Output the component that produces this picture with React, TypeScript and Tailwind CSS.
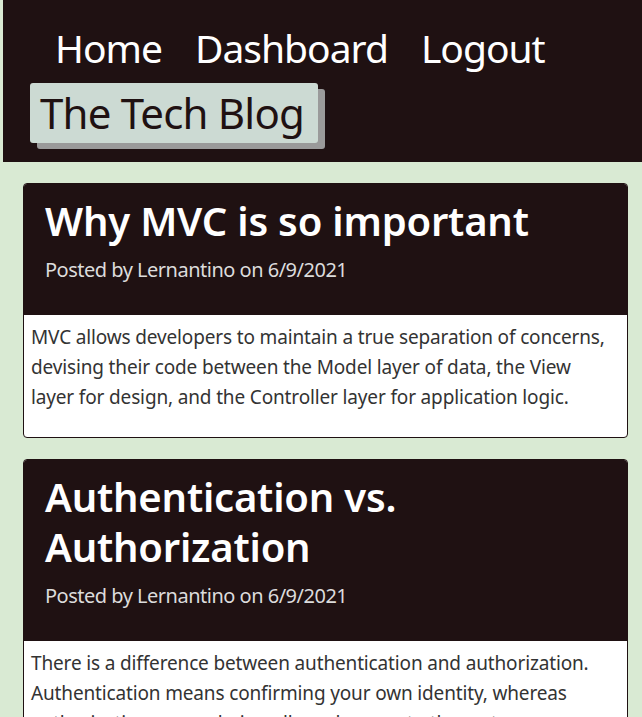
export default function App() {
  return (
    <div className="min-h-screen bg-[#d9ead3] pl-[3px] font-['Noto_Sans',sans-serif]">
      <header className="h-[162px] bg-[#1f1112] pt-[23px]">
        <nav className="flex gap-[33px] pl-[52px] text-[39px] leading-[50px] tracking-[-1px] text-white">
          <a>Home</a>
          <a>Dashboard</a>
          <a>Logout</a>
        </nav>
        <div className="mt-[10px] ml-[27px] inline-block rounded-[3px] bg-[#ccdad3] pl-[10px] pr-[14px] text-[42px] leading-[60px] tracking-[-0.8px] text-[#1f1112] shadow-[7px_6px_0_#9a9a9a]">
          The Tech Blog
        </div>
      </header>

      <main className="flex flex-col gap-[21px] pt-[21px] pl-[20px] pr-[14px]">
        <Post
          title="Why MVC is so important"
          meta="Posted by Lernantino on 6/9/2021"
          body="MVC allows developers to maintain a true separation of concerns, devising their code between the Model layer of data, the View layer for design, and the Controller layer for application logic."
        />
        <Post
          title="Authentication vs. Authorization"
          meta="Posted by Lernantino on 6/9/2021"
          body="There is a difference between authentication and authorization. Authentication means confirming your own identity, whereas authorization means being allowed access to the system."
        />
      </main>
    </div>
  )
}

function Post({ title, meta, body }: { title: string; meta: string; body: string }) {
  return (
    <article className="overflow-hidden rounded-[4px] border border-[#1f1112] bg-white">
      <div className="bg-[#1f1112] pl-[21px] pr-[40px] pt-[12px] pb-[30px]">
        <h2 className="text-[40px] leading-[50px] font-semibold tracking-[-0.2px] text-white">{title}</h2>
        <p className="mt-[9px] text-[20px] leading-[30px] tracking-[-0.5px] text-[#dcdcdc]">{meta}</p>
      </div>
      <p className="pl-[7px] pr-[14px] pt-[7px] pb-[25px] text-[19px] leading-[30px] tracking-[-0.15px] text-[#333]">{body}</p>
    </article>
  )
}
